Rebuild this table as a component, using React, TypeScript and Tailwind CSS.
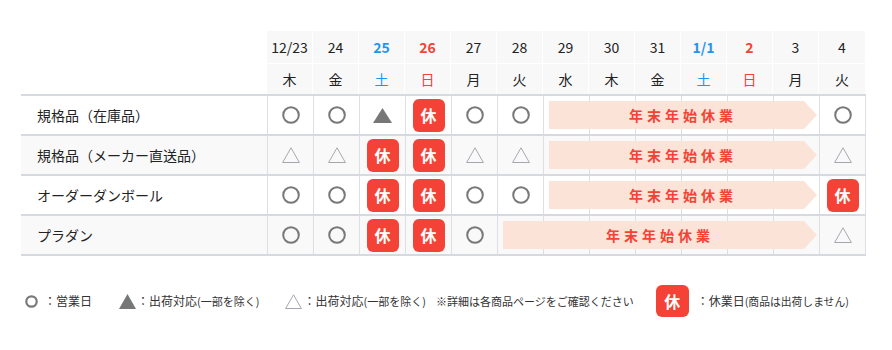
import React from "react";

type Mark = "O" | "T" | "t" | "K" | "";

const COLS = [
  { d: "12/23", w: "木", c: "" },
  { d: "24", w: "金", c: "" },
  { d: "25", w: "土", c: "blue" },
  { d: "26", w: "日", c: "red" },
  { d: "27", w: "月", c: "" },
  { d: "28", w: "火", c: "" },
  { d: "29", w: "水", c: "" },
  { d: "30", w: "木", c: "" },
  { d: "31", w: "金", c: "" },
  { d: "1/1", w: "土", c: "blue" },
  { d: "2", w: "日", c: "red" },
  { d: "3", w: "月", c: "" },
  { d: "4", w: "火", c: "" },
];

const COL_START = [
  "col-start-2",
  "col-start-3",
  "col-start-4",
  "col-start-5",
  "col-start-6",
  "col-start-7",
  "col-start-8",
  "col-start-9",
  "col-start-10",
  "col-start-11",
  "col-start-12",
  "col-start-13",
  "col-start-14",
];

type Row = {
  label: string;
  marks: Mark[];
  banner: string;
  alt: boolean;
};

const ROWS: Row[] = [
  {
    label: "規格品（在庫品）",
    marks: ["O", "O", "T", "K", "O", "O", "", "", "", "", "", "", "O"],
    banner: "col-start-8 col-span-6",
    alt: false,
  },
  {
    label: "規格品（メーカー直送品）",
    marks: ["t", "t", "K", "K", "t", "t", "", "", "", "", "", "", "t"],
    banner: "col-start-8 col-span-6",
    alt: true,
  },
  {
    label: "オーダーダンボール",
    marks: ["O", "O", "K", "K", "O", "O", "", "", "", "", "", "", "K"],
    banner: "col-start-8 col-span-6",
    alt: false,
  },
  {
    label: "プラダン",
    marks: ["O", "O", "K", "K", "O", "", "", "", "", "", "", "", "t"],
    banner: "col-start-7 col-span-7",
    alt: true,
  },
];

function Circle({ size = 18, sw = 2 }: { size?: number; sw?: number }) {
  const r = size / 2 - sw / 2 - 0.2;
  return (
    <svg width={size} height={size} viewBox={`0 0 ${size} ${size}`}>
      <circle cx={size / 2} cy={size / 2} r={r} fill="none" stroke="#787878" strokeWidth={sw} />
    </svg>
  );
}

function FilledTri({ w = 19, h = 15 }: { w?: number; h?: number }) {
  return (
    <svg width={w} height={h} viewBox={`0 0 ${w} ${h}`}>
      <polygon points={`${w / 2},0 ${w},${h} 0,${h}`} fill="#777777" />
    </svg>
  );
}

function OutlineTri({ w = 18, h = 16 }: { w?: number; h?: number }) {
  return (
    <svg width={w} height={h} viewBox={`0 0 ${w} ${h}`}>
      <polygon
        points={`${w / 2},0.8 ${w - 0.6},${h - 0.5} 0.6,${h - 0.5}`}
        fill="none"
        stroke="#a4a8ae"
        strokeWidth="1"
      />
    </svg>
  );
}

function Badge() {
  return (
    <div className="flex h-[33px] w-[32px] items-center justify-center rounded-[6px] bg-[#f44336] text-[16px] font-bold text-white">
      休
    </div>
  );
}

function MarkView({ m }: { m: Mark }) {
  if (m === "O") return <Circle />;
  if (m === "T") return <FilledTri />;
  if (m === "t") return <OutlineTri />;
  if (m === "K") return <Badge />;
  return null;
}

const GRID = "grid grid-cols-[246px_repeat(12,46px)_47px]";

export default function App() {
  return (
    <div className="h-[350px] w-[892px] bg-white pl-[21px] pt-[31px] font-['Noto_Sans_CJK_JP','Noto_Sans',sans-serif] text-[#222222]">
      {/* header */}
      <div className={GRID}>
        <div />
        {COLS.map((c, i) => {
          const color =
            c.c === "blue" ? "text-[#1e96f0] font-bold" : c.c === "red" ? "text-[#f44336] font-bold" : "";
          const wcolor = c.c === "blue" ? "text-[#1e96f0]" : c.c === "red" ? "text-[#f44336]" : "";
          return (
            <div key={i} className="flex flex-col border-r border-white bg-[#f8f8f8]">
              <div className={`flex h-[32px] items-center justify-center text-[14px] ${color}`}>{c.d}</div>
              <div className={`flex h-[31px] items-center justify-center border-t border-white text-[14px] ${wcolor}`}>
                {c.w}
              </div>
            </div>
          );
        })}
      </div>

      {/* body */}
      <div className="w-[845px] border-t-2 border-[#d6d9e0]">
        {ROWS.map((r, ri) => (
          <div
            key={ri}
            className={`${GRID} h-[40px] border-b-2 border-[#d6d9e0] ${r.alt ? "bg-[#f9f9fa]" : "bg-white"}`}
          >
            <div className="col-start-1 row-start-1 flex items-center pl-4 text-[14px]">{r.label}</div>
            {r.marks.map((m, i) => (
              <div
                key={i}
                className={`${COL_START[i]} row-start-1 flex items-center justify-center border-l border-[#dcdfe5] ${
                  i === 12 ? "border-r" : ""
                }`}
              >
                <MarkView m={m} />
              </div>
            ))}
            <div
              className={`${r.banner} row-start-1 ml-[6px] mr-[2px] flex h-[28px] items-center justify-center self-center bg-[#fbe4d7] text-[14px] font-bold tracking-[4px] text-[#f44336] [clip-path:polygon(0_0,calc(100%_-_13px)_0,100%_50%,calc(100%_-_13px)_100%,0_100%)]`}
            >
              年末年始休業
            </div>
          </div>
        ))}
      </div>

      {/* legend */}
      <div className="mt-[29px] flex items-center pl-[4px] text-[12px] text-[#333333]">
        <Circle size={13} sw={2.2} />
        <span className="ml-[6px]">：営業日</span>
        <span className="ml-[27px] flex items-center">
          <FilledTri w={17} h={15} />
        </span>
        <span className="ml-[1px]">
          ：出荷対応<span className="text-[11px]">(一部を除く)</span>
        </span>
        <span className="ml-[26px] flex items-center">
          <OutlineTri w={17} h={15} />
        </span>
        <span className="ml-[1px]">
          ：出荷対応<span className="text-[11px]">(一部を除く)</span>
        </span>
        <span className="ml-[10px] text-[11px]">※詳細は各商品ページをご確認ください</span>
        <span className="ml-[22px] flex h-[32px] w-[33px] items-center justify-center rounded-[6px] bg-[#f44336] text-[16px] font-bold text-white">
          休
        </span>
        <span className="ml-[8px]">：休業日</span>
        <span className="text-[10.8px]">(商品は出荷しません)</span>
      </div>
    </div>
  );
}
